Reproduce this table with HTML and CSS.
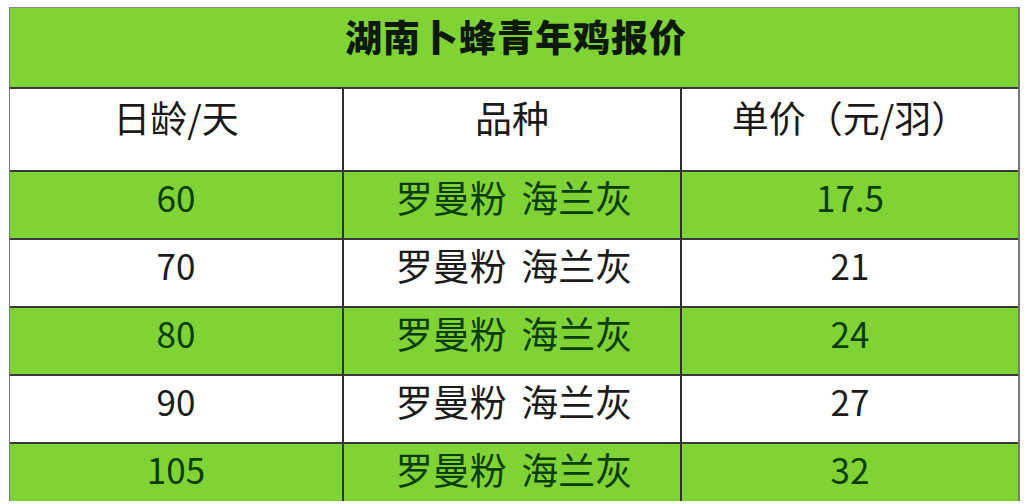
FILE: index.html
```html
<!DOCTYPE html>
<html lang="zh-CN">
<head>
<meta charset="utf-8">
<title>湖南卜蜂青年鸡报价</title>
<link rel="stylesheet" href="styles.css">
</head>
<body>
<div class="sheet">
  <div class="title">湖南卜蜂青年鸡报价</div>
  <div class="grid">
    <div class="cell head">日龄/天</div>
    <div class="cell head">品种</div>
    <div class="cell head">单价（元/羽）</div>

    <div class="cell g num">60</div>
    <div class="cell g txt">罗曼粉 海兰灰</div>
    <div class="cell g num">17.5</div>

    <div class="cell w num">70</div>
    <div class="cell w txt">罗曼粉 海兰灰</div>
    <div class="cell w num">21</div>

    <div class="cell g num">80</div>
    <div class="cell g txt">罗曼粉 海兰灰</div>
    <div class="cell g num">24</div>

    <div class="cell w num">90</div>
    <div class="cell w txt">罗曼粉 海兰灰</div>
    <div class="cell w num">27</div>

    <div class="cell g num">105</div>
    <div class="cell g txt">罗曼粉 海兰灰</div>
    <div class="cell g num">32</div>
  </div>
</div>
</body>
</html>
```

FILE: styles.css
```css
html, body {
  margin: 0;
  padding: 0;
  background: #ffffff;
  overflow: hidden;
}

body {
  padding: 7px 0 0 9px;
  font-family: "Noto Sans CJK SC", "Noto Sans", sans-serif;
}

.sheet {
  width: 1011px;
  height: 494px;
  overflow: hidden;
  border-left: 1px solid #7a7a7a;
  border-top: 1px solid #8a8a8a;
  border-right: 2px solid #777;
  box-sizing: border-box;
}

.title {
  height: 81px;
  background: #7fd334;
  border-bottom: 2px solid #3a3a3a;
  box-sizing: border-box;
  text-align: center;
  padding-top: 4px;
  padding-left: 4px;
  font-size: 37px;
  font-weight: 900;
  color: #0e1a08;
  letter-spacing: 1px;
  line-height: 48px;
}

.grid {
  display: grid;
  grid-template-columns: 334px 338px 1fr;
  grid-template-rows: 83px;
  grid-auto-rows: 68px;
}

.cell {
  display: flex;
  align-items: center;
  justify-content: center;
  border-bottom: 2px solid #3a3a3a;
  border-right: 2px solid #2e2e2e;
  box-sizing: border-box;
  padding-bottom: 16px;
  font-size: 36px;
  line-height: 1.3;
}

.cell:nth-child(3n) {
  border-right: none;
}

.head {
  background: #ffffff;
  color: #1a1a1a;
  padding-bottom: 24px;
  font-size: 37px;
}

.num {
  font-size: 35px;
}

.txt {
  font-size: 37px;
  word-spacing: 6px;
  padding-left: 4px;
}

.g {
  background: #7fd334;
  color: #0b3d0b;
}

.w {
  background: #ffffff;
  color: #1c1c1c;
}
```
